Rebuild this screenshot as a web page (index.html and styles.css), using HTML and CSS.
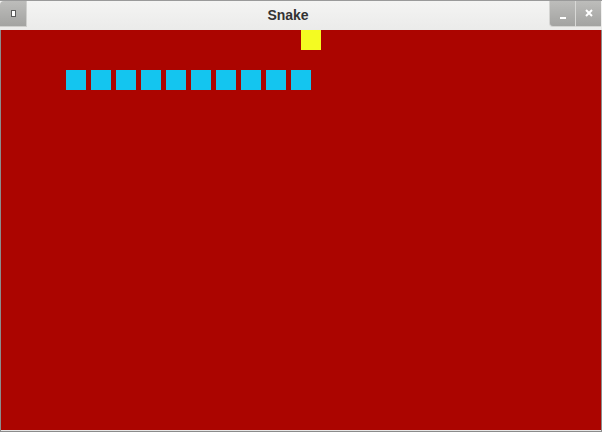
FILE: index.html
```html
<!DOCTYPE html>
<html>
<head>
<meta charset="utf-8">
<link rel="stylesheet" href="styles.css">
</head>
<body>
<div class="window">
  <div class="titlebar">
    <div class="btn btn-menu"><span class="menu-icon"></span></div>
    <div class="title">Snake</div>
    <div class="btn-group">
      <div class="btn btn-min"><span class="min-icon"></span></div>
      <div class="btn btn-close">
        <svg width="8" height="8" viewBox="0 0 8 8"><path d="M1 1L7 7M7 1L1 7" stroke="#ffffff" stroke-width="2"/></svg>
      </div>
    </div>
  </div>
  <div class="canvas">
    <div class="food"></div>
    <div class="snake">
      <div class="seg"></div><div class="seg"></div><div class="seg"></div><div class="seg"></div><div class="seg"></div>
      <div class="seg"></div><div class="seg"></div><div class="seg"></div><div class="seg"></div><div class="seg"></div>
    </div>
  </div>
  <div class="bottom"></div>
</div>
</body>
</html>
```
FILE: styles.css
```css
html, body {
  margin: 0;
  padding: 0;
  background: #8c8c8c;
}
.window {
  width: 602px;
  height: 432px;
  display: flex;
  flex-direction: column;
  overflow: hidden;
}
.titlebar {
  height: 30px;
  flex: none;
  display: flex;
  align-items: flex-start;
  background: linear-gradient(#f4f4f3, #ebebea);
  border-top: 1px solid #9a9a9a;
  box-sizing: border-box;
}
.btn {
  height: 26px;
  box-sizing: border-box;
  display: flex;
  align-items: center;
  justify-content: center;
  background: linear-gradient(#bdbdbb, #a3a3a1);
}
.btn-menu {
  width: 27px;
  border-top-left-radius: 4px;
  border-right: 1px solid #cfcfcd;
  border-bottom: 1px solid #cfcfcd;
}
.menu-icon {
  width: 3px;
  height: 5px;
  background: #ffffff;
  border: 1px solid #5a5a5a;
}
.title {
  flex: 1;
  text-align: center;
  font-family: "Liberation Sans", Arial, sans-serif;
  font-weight: bold;
  font-size: 14px;
  line-height: 28px;
  color: #333333;
}
.btn-group {
  display: flex;
  margin-right: 1px;
}
.btn-min {
  width: 27px;
  border-bottom-left-radius: 4px;
  border-left: 1px solid #d4d4d2;
  border-bottom: 1px solid #d4d4d2;
  border-right: 1px solid #d8d8d6;
  padding-top: 8px;
}
.min-icon {
  width: 6px;
  height: 2px;
  background: #ffffff;
}
.btn-close {
  width: 25px;
  border-bottom: 1px solid #d4d4d2;
  padding-bottom: 2px;
}
.canvas {
  position: relative;
  height: 400px;
  flex: none;
  margin: 0 1px;
  background: #ab0500;
}
.food {
  position: absolute;
  left: 300px;
  top: 0;
  width: 20px;
  height: 20px;
  background: #f4fb22;
}
.snake {
  position: absolute;
  left: 65px;
  top: 40px;
  display: flex;
  gap: 5px;
}
.seg {
  width: 20px;
  height: 20px;
  background: #14c5ef;
}
.bottom {
  height: 1px;
  margin: 0 1px;
  background: #e6e6e6;
}
```
